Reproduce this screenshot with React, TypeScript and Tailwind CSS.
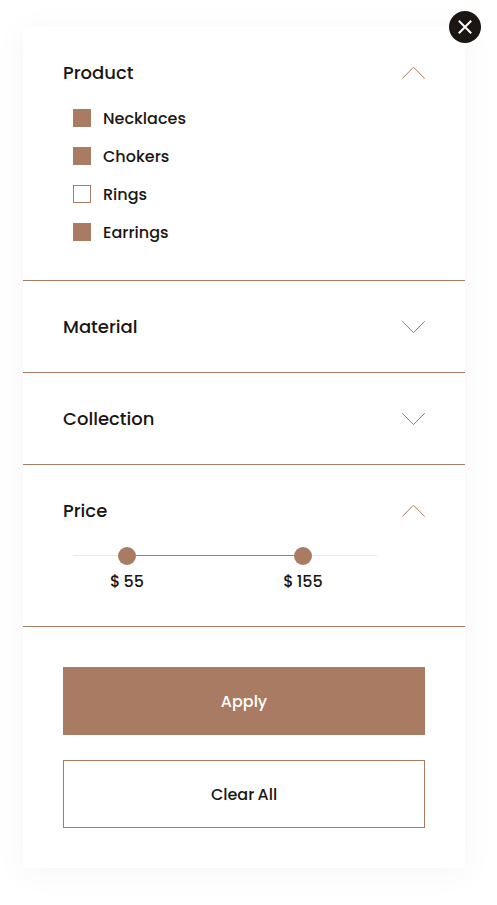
import { useState } from "react";
import type { ReactNode } from "react";

function Chevron({ open }: { open: boolean }) {
  return (
    <svg width="24" height="14" viewBox="0 0 24 14" fill="none" className="shrink-0">
      <path
        d={open ? "M0.25 12.6L11.5 1.2L22.75 12.6" : "M0.25 1.2L11.5 12.6L22.75 1.2"}
        stroke="#a97b63"
        strokeWidth="1"
      />
    </svg>
  );
}

type SectionProps = {
  title: string;
  open: boolean;
  onToggle: () => void;
  children?: ReactNode;
};

function Section({ title, open, onToggle, children }: SectionProps) {
  return (
    <section className="border-b border-[#a97b63] pt-8">
      <button
        onClick={onToggle}
        className="flex h-[27px] w-full items-center justify-between pr-[39px] pl-10 text-left text-[18px] leading-[27px] font-medium"
      >
        <span>{title}</span>
        <Chevron open={open} />
      </button>
      {open && children ? children : <div className="h-8" />}
    </section>
  );
}

const products = ["Necklaces", "Chokers", "Rings", "Earrings"];

export default function App() {
  const [checked, setChecked] = useState([true, true, false, true]);
  const [open, setOpen] = useState([true, false, false, true]);
  const toggle = (i: number) => setOpen(open.map((v, n) => (n === i ? !v : v)));

  return (
    <main className="h-[905px] w-[497px] overflow-hidden bg-white pt-[27px] pl-[23px] font-['Poppins','Inter',sans-serif] text-[#1c1613]">
      <div className="relative h-[841px] w-[442px] bg-white shadow-[0_4px_32px_rgba(28,22,19,0.045)]">
        <button
          aria-label="Close"
          className="absolute -top-4 -right-4 flex size-8 items-center justify-center rounded-full bg-[#1c1613]"
        >
          <svg width="16" height="16" viewBox="0 0 16 16" fill="none" stroke="white" strokeWidth="2">
            <path d="M1.8 1.8L14.2 14.2M14.2 1.8L1.8 14.2" />
          </svg>
        </button>

        <Section title="Product" open={open[0]} onToggle={() => toggle(0)}>
          <div className="flex flex-col gap-3.5 pt-5 pb-9 pl-[50px]">
            {products.map((name, i) => (
              <button
                key={name}
                onClick={() => setChecked(checked.map((v, n) => (n === i ? !v : v)))}
                className="flex h-6 items-center gap-3 text-base font-medium"
              >
                <span
                  className={
                    checked[i]
                      ? "size-[18px] border border-[#a97b63] bg-[#a97b63]"
                      : "size-[18px] border border-[#a97b63] bg-white"
                  }
                />
                <span className="pt-0.5">{name}</span>
              </button>
            ))}
          </div>
        </Section>
        <Section title="Material" open={open[1]} onToggle={() => toggle(1)} />
        <Section title="Collection" open={open[2]} onToggle={() => toggle(2)} />
        <Section title="Price" open={open[3]} onToggle={() => toggle(3)}>
          <div className="pt-[23px] pb-[33px] pl-[50px]">
            <div className="flex h-[18px] w-[304px] items-center">
              <span className="mb-px h-px w-[45px] bg-[#e9e9e9]" />
              <span className="size-[18px] rounded-full bg-[#a97b63]" />
              <span className="mb-px h-px w-[158px] bg-[#a97b63]" />
              <span className="size-[18px] rounded-full bg-[#a97b63]" />
              <span className="mb-px h-px w-[65px] bg-[#e9e9e9]" />
            </div>
            <div className="flex h-7 items-center pt-1.5 pl-[34px] text-base font-medium [word-spacing:-1px]">
              <span className="w-10 text-center whitespace-nowrap">$ 55</span>
              <span className="ml-[136px] w-10 text-center whitespace-nowrap">
                <span className="-mx-2">$ 155</span>
              </span>
            </div>
          </div>
        </Section>

        <div className="flex flex-col gap-[25px] px-10 pt-10">
          <button className="flex h-[68px] items-center justify-center bg-[#a97b63] text-base font-medium text-white">
            <span className="pt-0.5">Apply</span>
          </button>
          <button className="flex h-[68px] items-center justify-center border border-[#a97b63] bg-white text-base font-medium [word-spacing:-1px]">
            <span className="pt-0.5">Clear All</span>
          </button>
        </div>
      </div>
    </main>
  );
}
